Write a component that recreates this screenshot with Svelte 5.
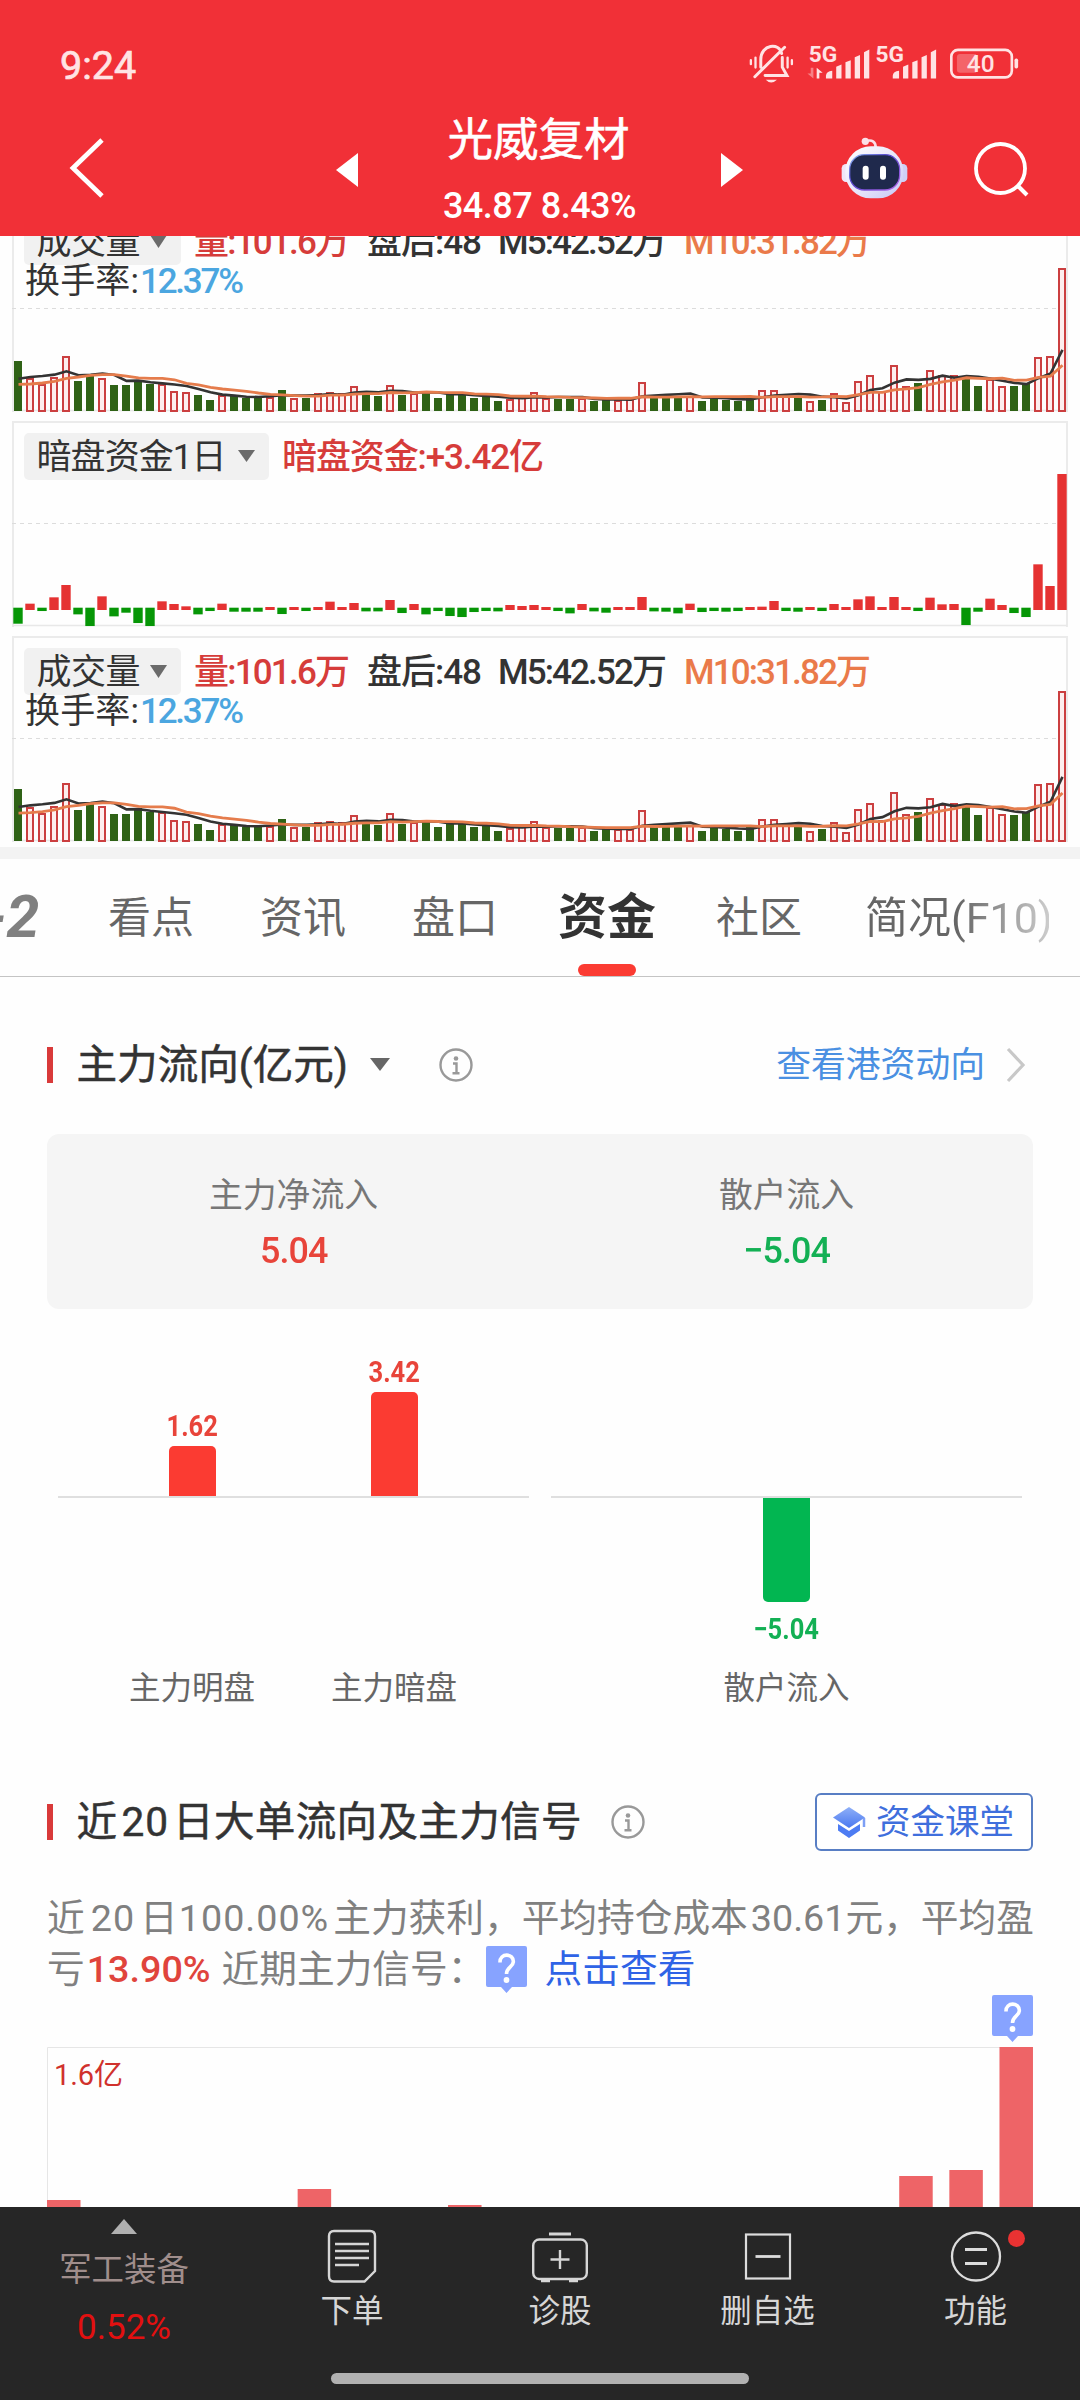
<script>
  const STEP = 12;
  const FIRST = 18;
  const BASE = 205;

  // Traded volume per day, oldest first; a leading "g" marks a falling day.
  const volume = (
    'g150 98 81 101 166 g90 g106 100 g78 g78 g94 g82 82 61 56 g49 g32 48 g45 g40 g45 43 g63 40 g40 53 57 53 74 g51 g45 79 ' +
    'g49 53 g56 g40 g53 g49 g40 g43 g30 36 43 56 40 g36 g36 40 g30 g33 33 35 88 g43 g43 g43 45 g30 g40 g33 g30 g40 64 64 45 ' +
    'g43 30 g33 55 27 91 109 59 139 76 g84 124 107 108 g100 g75 96 76 g75 g82 163 166 430'
  )
    .split(' ')
    .map((s) => ({ down: s[0] === 'g', value: Number(s.replace('g', '')) }));

  // Hidden-order net inflow per day, oldest first.
  const dark = [
    -48, 19, -10, 38, 75, -20, -55, 41, -26, -15, -46, -55, 26, 18, 11, -20, -10, 19, -12, -12, -12, 9, -19, 9, -10, 9, 25, 9,
    21, -11, -11, 30, -16, 18, -20, -10, -25, -28, -13, -10, -11, 15, 12, 15, 9, -10, -17, 18, -11, -15, 9, 9, 39, -11, -12,
    -17, 19, -13, -10, -12, -10, 9, 10, 27, -10, -12, 9, -10, 18, 9, 32, 41, 9, 39, 9, -10, 37, 17, 18, -52, -12, 34, 15, -16,
    -28, 137, 72, 408
  ];

  function average(span, seed) {
    return volume.map((_, i) =>
      i < seed.length ? seed[i] : volume.slice(i - span + 1, i + 1).reduce((a, d) => a + d.value, 0) / span
    );
  }
  const ma5 = average(5, [97, 102, 105, 109]);
  const ma10 = average(10, [80, 81, 84, 89, 98, 102, 107, 109, 109]);

  const points = (list, scale) => list.map((v, i) => `${FIRST + i * STEP + 0.5},${BASE - v * scale}`).join(' ');

  const tabs = ['看点', '资讯', '盘口', '资金', '社区', '简况(F10)'];
  const daily = [
    { day: 0, top: 153 },
    { day: 5, top: 142 },
    { day: 8, top: 158 },
    { day: 17, top: 129 },
    { day: 18, top: 123 },
    { day: 19, top: 0 }
  ];
</script>

{#snippet frame()}
  <path d="M13 206V1H1067V206" fill="none" stroke="#ebebeb" stroke-width="2" />
  <path d="M13 204.500H1067" stroke="#e8e8e8" stroke-width="1.500" />
  <path d="M12 102.500H1067" stroke="#dcdcdc" stroke-width="1" stroke-dasharray="4 4" />
{/snippet}

{#snippet volumeChart(scale, height)}
  <svg class="chart" width="1080" {height} viewBox="0 0 1080 {height}">
    {@render frame()}
    <rect x="24" y="12" width="157" height="47" rx="5" fill="#f1f1f1" />
    <text x="36.500" y="48" fill="#333" textLength="104">成交量</text>
    <path d="M150 29H167L158.500 42Z" fill="#6b6b6b" />
    <text x="194" y="48" fill="#d63c3a" class="num" textLength="156">量:101.6万</text>
    <text x="367" y="48" fill="#333" class="num" textLength="115">盘后:48</text>
    <text x="498" y="48" fill="#333" class="num" textLength="169">M5:42.52万</text>
    <text x="684" y="48" fill="#ea7a4a" class="num" textLength="187">M10:31.82万</text>
    <text x="25" y="87" fill="#333" textLength="114">换手率:</text>
    <text x="140" y="87" fill="#4ba6e0" class="num" textLength="104">12.37%</text>
    {#each volume as d, i}
      {@const h = Math.round((d.value / 3) * scale)}
      {#if d.down}
        <rect x={FIRST + i * STEP - 4} y={BASE - h} width="8" height={h} fill="#2f6216" />
      {:else}
        <rect x={FIRST + i * STEP - 3} y={BASE - h + 1} width="6" height={h - 1} fill="#fdeeee" stroke="#cb3f40" stroke-width="2" />
      {/if}
    {/each}
    <polyline points={points(ma5, scale / 3)} fill="none" stroke="#333" stroke-width="2.600" />
    <polyline points={points(ma10, scale / 3)} fill="none" stroke="#e57c4c" stroke-width="2.800" />
  </svg>
{/snippet}

{#snippet info()}
  <svg class="info" width="36" height="36" viewBox="0 0 36 36" fill="none" stroke="#999" stroke-width="2.400">
    <circle cx="18" cy="18" r="15.500" />
    <circle cx="18" cy="11.500" r="2.300" fill="#999" stroke="none" />
    <path d="M15 16.500H18.500V26M14.500 26.200H21.500" />
  </svg>
{/snippet}

{#snippet question()}
  <svg class="question" width="41" height="47" viewBox="0 0 41 47">
    <path d="M2 0H39Q41 0 41 2V39Q41 41 39 41H26L20.500 47L15 41H2Q0 41 0 39V2Q0 0 2 0Z" fill="#87a3ff" />
    <path d="M14 16.500C13.500 6.500 28 7 27.300 16C27 21 20.500 21 20.500 28" fill="none" stroke="#fff" stroke-width="3.600" />
    <circle cx="20.500" cy="34" r="2.900" fill="#fff" />
  </svg>
{/snippet}

<div class="screen">
  <header>
    <div class="status">
      <span>9:24</span>
      <svg width="277" height="43" viewBox="50 40 830 130" fill="none" stroke="#ffe3e4">
        <g stroke-width="9" stroke-linecap="round">
          <path d="M91 113V90C91 43 148 38 154 72M156 84V113L170 138H104M73 142L163 53" />
          <path d="M61 92V104M75 84V114M172 84V114M185 92V104" stroke-width="7" />
        </g>
        <path d="M106 151H140Q122 168 106 151Z" fill="#ffe3e4" stroke="none" />
        <g fill="#ffe3e4" stroke="none">
          <text x="236" y="96" class="net" textLength="86" lengthAdjust="spacingAndGlyphs">5G</text>
          <text x="438" y="96" class="net" textLength="86" lengthAdjust="spacingAndGlyphs">5G</text>
          <path d="M260 115L278 130H268V147H260Z" />
          <path d="M250 115V147L232 132H242V115Z" opacity=".45" />
          {#each [0, 202] as dx}
            <path d="M{288 + dx} 147V139Q{289 + dx} 126 {307 + dx} 124V147Z" />
            <path d="M{319 + dx} 147V112L{335 + dx} 105V147Z" />
            <path d="M{347 + dx} 147V98L{363 + dx} 92V147Z" />
            <path d="M{375 + dx} 147V83L{391 + dx} 76V147Z" />
            <path d="M{403 + dx} 147V68L{419 + dx} 60V147Z" />
          {/each}
        </g>
        <rect x="667" y="61" width="183" height="83" rx="20" stroke-width="8" />
        <path d="M694 73H742V130H694Q684 130 684 120V83Q684 73 694 73Z" fill="#fff" opacity=".25" stroke="none" />
        <rect x="858" y="87" width="11" height="30" rx="5" fill="#ffe3e4" stroke="none" />
        <text x="714" y="128" class="battery" fill="#ffe3e4" stroke="none" textLength="84" lengthAdjust="spacingAndGlyphs">40</text>
      </svg>
    </div>
    <div class="nav">
      <svg class="back" width="40" height="64" viewBox="0 0 40 64"><path d="M35 4L6 32L35 60" fill="none" stroke="#fff" stroke-width="4.800" /></svg>
      <svg class="prev" width="22" height="34" viewBox="0 0 22 34"><path d="M22 0V34L0 17Z" fill="#fff" /></svg>
      <div class="stock">
        <h1>光威复材</h1>
        <p>34.87 8.43%</p>
      </div>
      <svg class="next" width="22" height="34" viewBox="0 0 22 34"><path d="M0 0V34L22 17Z" fill="#fff" /></svg>
      <svg class="robot" width="68" height="64" viewBox="0 0 204 192">
        <defs>
          <linearGradient id="shell" x1="0" y1="0" x2="1" y2="1">
            <stop offset="0" stop-color="#fff" />
            <stop offset=".6" stop-color="#e4e2fa" />
            <stop offset="1" stop-color="#c3c6f5" />
          </linearGradient>
          <linearGradient id="visor" x1="0" y1="0" x2="1" y2="1">
            <stop offset="0" stop-color="#8db9f3" />
            <stop offset=".4" stop-color="#5544cc" />
            <stop offset="1" stop-color="#b366e8" />
          </linearGradient>
        </defs>
        <path d="M76 15C94 10 104 18 104 34" fill="none" stroke="#fbdfe8" stroke-width="8" />
        <circle cx="73" cy="16" r="11" fill="#fbdfe8" />
        <rect x="2" y="84" width="28" height="54" rx="13" fill="#f0e6f8" />
        <rect x="171" y="84" width="28" height="54" rx="13" fill="#cfd0f6" />
        <rect x="13" y="31" width="174" height="156" rx="76" fill="url(#shell)" />
        <rect x="26" y="56" width="150" height="106" rx="44" fill="#1f294c" stroke="url(#visor)" stroke-width="4" />
        <rect x="65" y="89" width="18" height="42" rx="9" fill="#fff" />
        <rect x="117" y="89" width="18" height="42" rx="9" fill="#fff" />
      </svg>
      <svg class="search" width="58" height="58" viewBox="0 0 58 58" fill="none" stroke="#fff" stroke-width="3.800">
        <circle cx="28.500" cy="28.500" r="24.500" />
        <path d="M46 46L55 55" stroke-width="4" />
      </svg>
    </div>
  </header>

  <section class="charts">
    {@render volumeChart(1, 215)}
    <svg class="chart" width="1080" height="215" viewBox="0 0 1080 215">
      {@render frame()}
      <rect x="24" y="12" width="245" height="47" rx="5" fill="#f1f1f1" />
      <text x="36.500" y="48" fill="#333" textLength="190">暗盘资金1日</text>
      <path d="M238 29H255L246.500 41Z" fill="#6b6b6b" />
      <text x="282" y="48" fill="#d63c3a" class="num" textLength="262">暗盘资金:+3.42亿</text>
      {#each dark as v, i}
        <rect
          x={FIRST + i * STEP - 4.7}
          y={v > 0 ? 189 - v / 3 : 186.700}
          width="9.400"
          height={Math.abs(v) / 3}
          fill={v > 0 ? '#e53232' : '#069606'}
        />
      {/each}
    </svg>
    {@render volumeChart(1.049, 211)}
  </section>

  <nav class="tabs">
    <span class="level">-2</span>
    {#each tabs as tab}
      <span class="tab" class:active={tab === '资金'} class:last={tab === '简况(F10)'}>{tab}</span>
    {/each}
  </nav>

  <section class="flow">
    <div class="heading">
      <i></i>
      <h2>主力流向(亿元)</h2>
      <svg class="drop" width="20" height="13" viewBox="0 0 20 13"><path d="M0 0H20L10 13Z" fill="#666" /></svg>
      {@render info()}
      <a href="#hk">查看港资动向</a>
      <svg class="more" width="22" height="36" viewBox="0 0 22 36"><path d="M3 2L18 18L3 34" fill="none" stroke="#c8c8c8" stroke-width="3.200" /></svg>
    </div>

    <div class="card">
      <div><span>主力净流入</span><b class="up">5.04</b></div>
      <div><span>散户流入</span><b class="down">−5.04</b></div>
    </div>

    <div class="columns">
      <div class="group main">
        <div class="plot">
          <div class="col"><b class="up">1.62</b><i class="short"></i></div>
          <div class="col"><b class="up">3.42</b><i></i></div>
        </div>
        <div class="names"><span>主力明盘</span><span>主力暗盘</span></div>
      </div>
      <div class="group retail">
        <div class="plot"></div>
        <div class="under"><i></i><b class="down">−5.04</b></div>
        <div class="names"><span>散户流入</span></div>
      </div>
    </div>
  </section>

  <section class="signals">
    <div class="heading">
      <i></i>
      <h2>近<span class="count">20</span>日大单流向及主力信号</h2>
      {@render info()}
      <button>
        <svg width="34" height="31" viewBox="0 0 34 31">
          <defs>
            <linearGradient id="cap" x1="0" y1="0" x2="0" y2="1">
              <stop offset="0" stop-color="#8fb0f8" />
              <stop offset="1" stop-color="#4a78f0" />
            </linearGradient>
          </defs>
          <path d="M17 0L33 10.500L17 21L1 10.500Z" fill="url(#cap)" />
          <path d="M6 17L17 24L28 17V23.500L17 31L6 23.500Z" fill="#4d7cf3" />
          <path d="M32 11V20" stroke="#7d9ff5" stroke-width="2.500" />
        </svg>
        <span>资金课堂</span>
      </button>
    </div>
    <div class="summary">
      <p class="first">近<span class="count">20</span>日<span class="share">100.00%</span>主力获利，平均持仓成本<span class="cost">30.61</span>元，平均盈</p>
      <p class="second"><span>亏</span><b>13.90%</b><span class="recent">近期主力信号：</span>{@render question()}<a href="#signals">点击查看</a></p>
    </div>
    <div class="daily">
      <div class="marker">{@render question()}</div>
      <svg width="986" height="160" viewBox="0 0 986 160">
        <path d="M.500 160V.500H986" fill="none" stroke="#e6e6e6" />
        <text x="7" y="37.500" fill="#d0312d" textLength="69">1.6亿</text>
        {#each daily as d}
          <rect x={d.day * 50.130} y={d.top} width="33.500" height={160 - d.top} fill="#ee6467" />
        {/each}
      </svg>
    </div>
  </section>

  <footer>
    <div class="sector">
      <svg width="26" height="15" viewBox="0 0 26 15"><path d="M0 15L13 0L26 15Z" fill="#b0b0b0" /></svg>
      <span>军工装备</span>
      <b>0.52%</b>
    </div>
    <div class="action order">
      <svg width="54" height="58" viewBox="0 0 54 58" fill="none" stroke="#d6d6d6" stroke-width="2.400">
        <path d="M9 4H45Q50 4 50 9V44L39.500 54.500H9Q4 54.500 4 49V9Q4 4 9 4Z" />
        <path d="M10 17H44M10 24H44M10 31H44M10 38H34" />
      </svg>
      <span>下单</span>
    </div>
    <div class="action doctor">
      <svg width="60" height="58" viewBox="0 0 60 58" fill="none" stroke="#d6d6d6" stroke-width="2.400">
        <path d="M19 7H41" stroke-width="3" />
        <rect x="3.200" y="12.500" width="53.600" height="39.500" rx="6" />
        <path d="M20.500 32.500H39.500M30 23V42M11 54H20M39 54H48" />
      </svg>
      <span>诊股</span>
    </div>
    <div class="action remove">
      <svg width="54" height="58" viewBox="0 0 54 58" fill="none" stroke="#dcdcdc" stroke-width="2.200">
        <rect x="5" y="7.500" width="44" height="44" />
        <path d="M14.500 29.500H39.500" stroke-width="2.800" />
      </svg>
      <span>删自选</span>
    </div>
    <div class="action tools">
      <svg width="54" height="58" viewBox="0 0 54 58" fill="none" stroke="#dcdcdc" stroke-width="2.300">
        <circle cx="27" cy="29.500" r="24" />
        <path d="M16 22.500H38M16 36.500H38" stroke-width="2.800" />
      </svg>
      <em></em>
      <span>功能</span>
    </div>
    <div class="home"></div>
  </footer>
</div>

<style>
  :global(body) {
    margin: 0;
    background: #fff;
  }
  .screen {
    width: 1080px;
    height: 2400px;
    display: flex;
    flex-direction: column;
    overflow: hidden;
    background: #fefefe;
    color: #333;
    font-family: Roboto, 'Noto Sans CJK SC', sans-serif;
    line-height: 1;
  }
  .screen :is(h1, h2, p) {
    margin: 0;
    font-weight: 400;
  }
  .screen svg {
    display: block;
    flex: none;
  }
  span, b, a, h1, h2, p {
    white-space: nowrap;
  }
  a {
    text-decoration: none;
  }

  header {
    height: 236px;
    flex: none;
    background: #f13037;
    color: #fff;
  }
  .status {
    height: 106px;
    display: flex;
    justify-content: space-between;
    padding: 0 57px 0 60px;
  }
  .status span {
    padding-top: 46px;
    font-size: 39.5px;
    color: #ffe3e4;
    -webkit-text-stroke: 0.7px;
  }
  .status svg {
    margin-top: 43px;
  }
  .net {
    font-size: 64px;
    font-weight: 700;
  }
  .battery {
    font-size: 70px;
    font-weight: 500;
  }
  .nav {
    height: 130px;
    display: flex;
    align-items: flex-start;
  }
  .back {
    margin: 30px 0 0 67px;
  }
  .prev {
    margin: 47px 0 0 229px;
  }
  .stock {
    width: 363px;
    text-align: center;
  }
  .stock h1 {
    padding-top: 10px;
    font-size: 45.5px;
    line-height: 50px;
    text-indent: -2px;
    -webkit-text-stroke: 0.6px;
  }
  .stock p {
    font-size: 36px;
    line-height: 40px;
    padding-top: 20px;
    font-weight: 500;
    letter-spacing: -0.5px;
  }
  .next {
    margin-top: 47px;
  }
  .robot {
    margin: 30px 0 0 98px;
  }
  .search {
    margin: 34px 0 0 62.5px;
  }

  .charts {
    height: 611px;
    flex: none;
    overflow: hidden;
    border-bottom: 12px solid #f3f3f3;
  }
  .charts svg:first-child {
    margin-top: -30px;
  }
  .chart text {
    font-size: 35px;
  }
  .chart .num {
    font-weight: 500;
  }

  .tabs {
    height: 117px;
    flex: none;
    display: flex;
    border-bottom: 1px solid #c4c4c4;
    color: #666;
    font-size: 43px;
    line-height: 118px;
  }
  .level {
    width: 108px;
    text-indent: -16px;
    font-size: 59px;
    font-weight: 700;
    font-style: italic;
    line-height: 116px;
    color: #808080;
  }
  .tab {
    width: 152px;
  }
  .tab:nth-child(4) {
    width: 153px;
  }
  .tab.active {
    position: relative;
    margin-left: -7px;
    width: 158px;
    font-size: 49px;
    font-weight: 700;
    color: #333;
  }
  .tab.active::after {
    content: '';
    position: absolute;
    left: 20px;
    bottom: 0;
    width: 58px;
    height: 12px;
    border-radius: 6px;
    background: #fb3b32;
  }
  .tab:nth-child(6) {
    width: 149px;
  }
  .tab.last {
    width: 184px;
    background: linear-gradient(90deg, #666 50%, #ccc 100%);
    background-clip: text;
    color: transparent;
  }

  .heading {
    display: flex;
    align-items: center;
  }
  .heading > i {
    width: 6px;
    height: 36px;
    background: #d93a3a;
  }
  .heading h2 {
    margin-left: 23.5px;
    font-size: 40.6px;
    line-height: 50px;
    -webkit-text-stroke: 0.5px;
  }
  .count {
    margin: 0 4px;
    letter-spacing: 1px;
  }
  .flow {
    padding: 0 47px;
    height: 816px;
    flex: none;
    box-sizing: border-box;
  }
  .flow .heading {
    padding-top: 60px;
    height: 55px;
  }
  .drop {
    margin-left: 22px;
  }
  .drop + :global(.info) {
    margin-left: 48px;
  }
  .heading a {
    margin-left: auto;
    font-size: 34.8px;
    line-height: 36px;
    color: #4a90e2;
  }
  .more {
    margin: 0 6px 0 20px;
  }
  .card {
    display: grid;
    grid-template-columns: 1fr 1fr;
    height: 175px;
    margin-top: 42px;
    border-radius: 12px;
    background: #f5f5f5;
  }
  .card div {
    display: flex;
    flex-direction: column;
    align-items: center;
    padding-top: 45px;
  }
  .card span {
    font-size: 33.8px;
    line-height: 34px;
    color: #777;
  }
  .card b {
    font-size: 37px;
    line-height: 36px;
    margin-top: 20px;
    font-weight: 500;
    letter-spacing: -1px;
    transform: scaleX(0.97);
  }
  .up {
    color: #e8443a;
  }
  .down {
    color: #13b054;
  }
  .columns {
    display: flex;
    justify-content: space-between;
    padding: 0 11px;
  }
  .group {
    width: 471px;
    height: 400px;
    display: flex;
    flex-direction: column;
  }
  .plot {
    height: 187px;
    display: flex;
    align-items: flex-end;
    border-bottom: 2px solid #dfdfdf;
  }
  .col {
    display: flex;
    flex-direction: column;
    align-items: center;
    width: 202px;
  }
  .col:first-child {
    margin-left: 33.5px;
  }
  .col i {
    width: 47px;
    height: 104px;
    border-radius: 5px 5px 0 0;
    background: #fb3b32;
  }
  .col .short {
    height: 50px;
  }
  .group b {
    font-size: 29px;
    line-height: 30px;
    font-weight: 700;
    transform: scaleX(0.88);
  }
  .col b {
    margin-bottom: 5px;
  }
  .main .names {
    margin-top: 174px;
    padding-left: 33px;
  }
  .names {
    display: flex;
    font-size: 31.5px;
    line-height: 34px;
    color: #666;
  }
  .names span {
    width: 202px;
    text-align: center;
  }
  .under {
    height: 174px;
    display: flex;
    flex-direction: column;
    align-items: center;
  }
  .under i {
    width: 47px;
    height: 104px;
    border-radius: 0 0 5px 5px;
    background: #02b651;
  }
  .under b {
    margin-top: 12px;
  }
  .retail .names {
    justify-content: center;
  }

  .signals {
    height: 414px;
    flex: none;
    padding: 0 47px;
  }
  .signals .heading {
    height: 58px;
  }
  .signals h2 {
    letter-spacing: 0.3px;
  }
  .signals h2 + :global(.info) {
    margin-left: 28px;
  }
  .signals button {
    margin-left: auto;
    display: flex;
    align-items: center;
    gap: 10px;
    width: 218px;
    height: 58px;
    padding: 0 0 0 15px;
    border: 2px solid #587ec4;
    border-radius: 6px;
    background: #fff;
    color: #3f6fdd;
    font: inherit;
    font-size: 34.5px;
  }
  .summary {
    height: 102px;
    padding-top: 42px;
    font-size: 37.7px;
    line-height: 51px;
    color: #808080;
  }
  .summary .count {
    margin: 0 5px 0 6px;
  }
  .share {
    margin: 0 4px 0 1px;
    letter-spacing: 1px;
  }
  .cost {
    margin-left: 3px;
  }
  .second {
    display: flex;
    align-items: center;
    height: 51px;
  }
  .second b {
    margin: 0 11px 0 2px;
    font-weight: 500;
    color: #e0443c;
  }
  .second a {
    margin-left: 18px;
    color: #2f63e6;
  }
  .recent {
    width: 264px;
  }
  .marker {
    display: flex;
    justify-content: flex-end;
    height: 52px;
  }
  .daily svg text {
    font-size: 29px;
  }
  .daily > svg {
    overflow: visible;
  }

  footer {
    position: relative;
    z-index: 1;
    height: 193px;
    flex: none;
    display: grid;
    grid-template-columns: 248px 208px 208px 207px 209px;
    grid-template-rows: 166px 11px;
    background: #262626;
    color: #d6d6d6;
    font-size: 31.5px;
  }
  .sector {
    display: flex;
    flex-direction: column;
    align-items: center;
    padding-top: 12px;
  }
  .sector span {
    margin-top: 19px;
    font-size: 32.4px;
    line-height: 34px;
    color: #a08e8c;
  }
  .sector b {
    margin-top: 23px;
    font-size: 35px;
    line-height: 36px;
    font-weight: 400;
    color: #e31010;
  }
  .action {
    position: relative;
    display: flex;
    flex-direction: column;
    align-items: center;
    padding-top: 20px;
  }
  .action span {
    line-height: 34px;
    margin-top: 10px;
  }
  .action em {
    position: absolute;
    left: 137px;
    top: 23px;
    width: 17px;
    height: 17px;
    border-radius: 50%;
    background: #e93232;
  }
  .home {
    grid-column: 1 / -1;
    justify-self: center;
    width: 418px;
    height: 11px;
    border-radius: 6px;
    background: #b1b1b1;
  }
</style>
